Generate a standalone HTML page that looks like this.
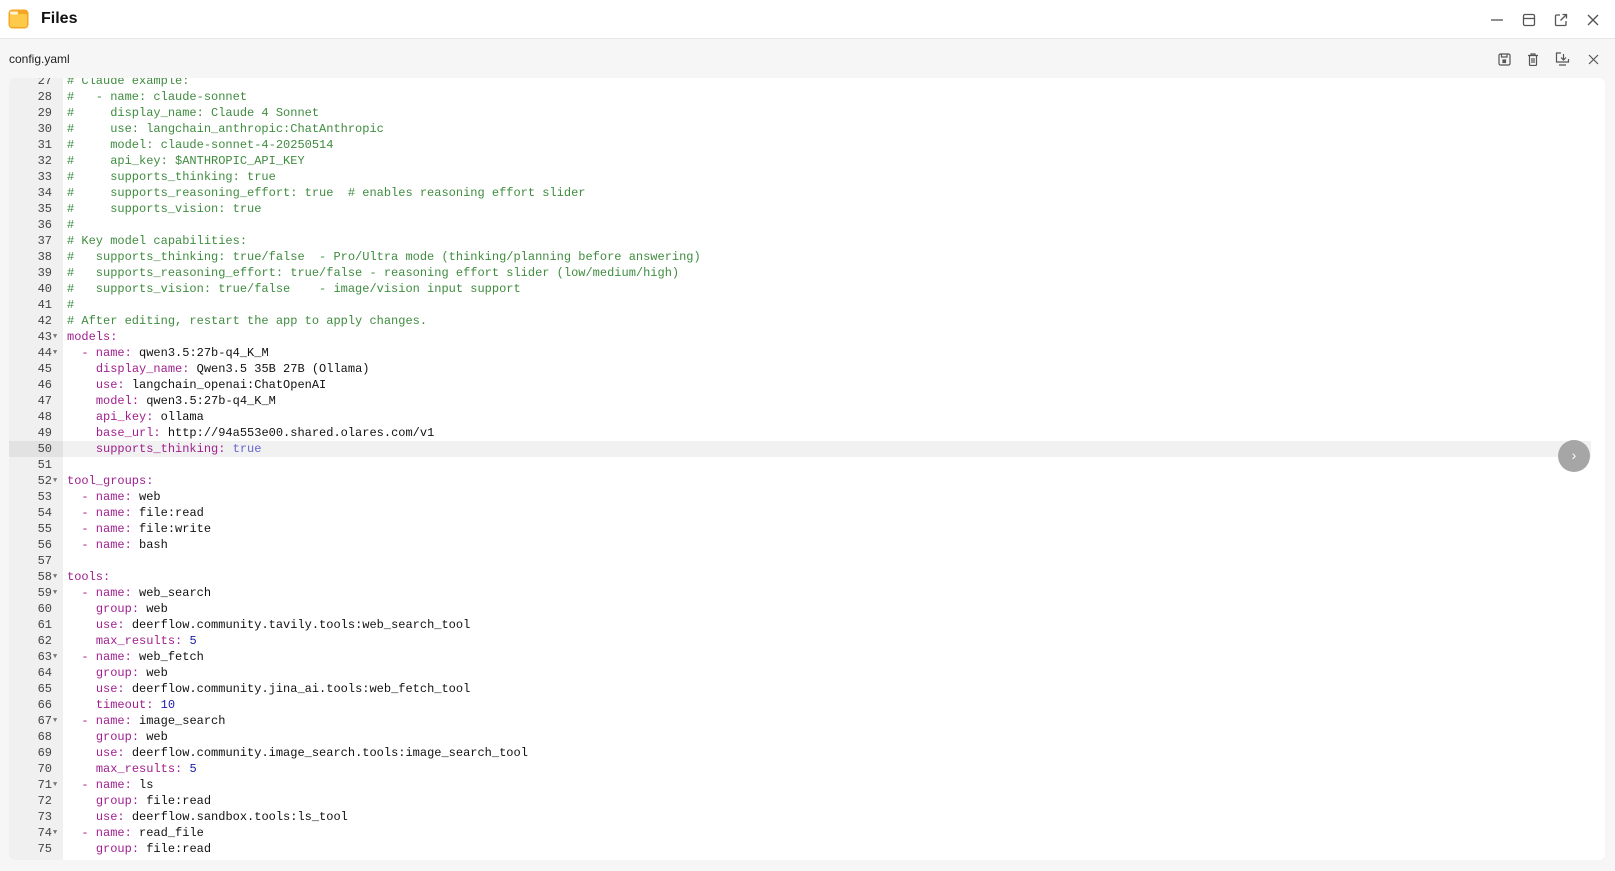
<!DOCTYPE html>
<html><head><meta charset="utf-8"><style>
*{margin:0;padding:0;box-sizing:border-box}
body{width:1615px;height:871px;background:#f6f6f6;font-family:"Liberation Sans",sans-serif;overflow:hidden;position:relative}
.title{position:absolute;left:0;top:0;width:1615px;height:39px;background:#fff;border-bottom:1px solid #e6e6e6}
.title .t{position:absolute;left:41px;top:10px;font-size:16px;font-weight:bold;color:#111}
.fname{position:absolute;left:9px;top:52px;font-size:12px;color:#222}
.panel{position:absolute;left:9px;top:78px;width:1596px;height:782px;background:#fff;border-radius:6px;overflow:hidden}
.gut{position:absolute;left:0;top:0;width:54px;height:100%;background:#f0f0f0}
.code{position:absolute;left:0;top:-5px;width:100%;font-family:"Liberation Mono",monospace;font-size:12px}
.l{height:16px;line-height:16px;white-space:pre;position:relative}
.n{position:absolute;left:0;width:43px;text-align:right;color:#444}
.f{position:absolute;left:44px;top:0;font-size:7px;color:#777}
.c{position:absolute;left:58px;color:#111}
.hl{background:#f1f1f1;width:1582px}
.hl .n{background:#e2e2e2;width:54px;padding-right:11px}
.g{color:#3f8c3f}.k{color:#a0208f}.v{color:#1c1ca8}.b{color:#6666cc}
svg{position:absolute}
</style></head><body>
<div class="title">
<svg style="left:8px;top:9px" width="21" height="20" viewBox="0 0 21 20"><rect x="0.5" y="0.5" width="20" height="19" rx="4" fill="#f5a623"/><rect x="2" y="5" width="17" height="13" rx="2" fill="#ffc94a"/><rect x="2" y="2.5" width="8" height="3" rx="1" fill="#fff3d0"/></svg>
<div class="t">Files</div>
<svg style="left:1490px;top:13px" width="14" height="14" viewBox="0 0 14 14" fill="none" stroke="#555" stroke-width="1.3"><path d="M1 7H13"/></svg>
<svg style="left:1522px;top:13px" width="14" height="14" viewBox="0 0 14 14" fill="none" stroke="#555" stroke-width="1.3"><rect x="1.5" y="1.5" width="11" height="11" rx="1.5"/><path d="M1.5 5.5H12.5"/></svg>
<svg style="left:1554px;top:13px" width="14" height="14" viewBox="0 0 14 14" fill="none" stroke="#555" stroke-width="1.3"><path d="M6 2H2.5A1 1 0 0 0 1.5 3V11.5A1 1 0 0 0 2.5 12.5H11A1 1 0 0 0 12 11.5V8M8.5 1.5H12.5V5.5M12.5 1.5L6.5 7.5"/></svg>
<svg style="left:1586px;top:13px" width="14" height="14" viewBox="0 0 14 14" fill="none" stroke="#555" stroke-width="1.4"><path d="M2 2L12 12M12 2L2 12"/></svg>
</div>
<div class="fname">config.yaml</div>
<svg style="left:1498px;top:53px" width="13" height="13" viewBox="0 0 13 13" fill="none" stroke="#555" stroke-width="1.2"><rect x="1" y="1" width="11" height="11" rx="1.5"/><path d="M3.5 1V4H9V1"/><rect x="5" y="7" width="2.5" height="2.5" fill="#555"/></svg>
<svg style="left:1527px;top:53px" width="12" height="13" viewBox="0 0 12 13" fill="none" stroke="#555" stroke-width="1.2"><path d="M1 2.5H11M4 2.5V1H8V2.5M2.5 2.5V11.5A1 1 0 0 0 3.5 12.5H8.5A1 1 0 0 0 9.5 11.5V2.5M5 5V10M7 5V10"/></svg>
<svg style="left:1555px;top:52px" width="15" height="14" viewBox="0 0 15 14" fill="none" stroke="#555" stroke-width="1.2"><path d="M6 1H1.5V10H13.5V7M4 13H11M8.5 2V8M6 5.5L8.5 8L11 5.5"/></svg>
<svg style="left:1588px;top:54px" width="11" height="11" viewBox="0 0 11 11" fill="none" stroke="#555" stroke-width="1.2"><path d="M1 1L10 10M10 1L1 10"/></svg>
<div class="panel"><div class="gut"></div><div class="code">
<div class="l"><span class="n">27</span><span class="c g"># Claude example:</span></div>
<div class="l"><span class="n">28</span><span class="c g">#   - name: claude-sonnet</span></div>
<div class="l"><span class="n">29</span><span class="c g">#     display_name: Claude 4 Sonnet</span></div>
<div class="l"><span class="n">30</span><span class="c g">#     use: langchain_anthropic:ChatAnthropic</span></div>
<div class="l"><span class="n">31</span><span class="c g">#     model: claude-sonnet-4-20250514</span></div>
<div class="l"><span class="n">32</span><span class="c g">#     api_key: $ANTHROPIC_API_KEY</span></div>
<div class="l"><span class="n">33</span><span class="c g">#     supports_thinking: true</span></div>
<div class="l"><span class="n">34</span><span class="c g">#     supports_reasoning_effort: true  # enables reasoning effort slider</span></div>
<div class="l"><span class="n">35</span><span class="c g">#     supports_vision: true</span></div>
<div class="l"><span class="n">36</span><span class="c g">#</span></div>
<div class="l"><span class="n">37</span><span class="c g"># Key model capabilities:</span></div>
<div class="l"><span class="n">38</span><span class="c g">#   supports_thinking: true/false  - Pro/Ultra mode (thinking/planning before answering)</span></div>
<div class="l"><span class="n">39</span><span class="c g">#   supports_reasoning_effort: true/false - reasoning effort slider (low/medium/high)</span></div>
<div class="l"><span class="n">40</span><span class="c g">#   supports_vision: true/false    - image/vision input support</span></div>
<div class="l"><span class="n">41</span><span class="c g">#</span></div>
<div class="l"><span class="n">42</span><span class="c g"># After editing, restart the app to apply changes.</span></div>
<div class="l"><span class="n">43</span><span class="f">▼</span><span class="c"><span class="k">models:</span></span></div>
<div class="l"><span class="n">44</span><span class="f">▼</span><span class="c">  <span class="k">- name:</span> qwen3.5:27b-q4_K_M</span></div>
<div class="l"><span class="n">45</span><span class="c">    <span class="k">display_name:</span> Qwen3.5 35B 27B (Ollama)</span></div>
<div class="l"><span class="n">46</span><span class="c">    <span class="k">use:</span> langchain_openai:ChatOpenAI</span></div>
<div class="l"><span class="n">47</span><span class="c">    <span class="k">model:</span> qwen3.5:27b-q4_K_M</span></div>
<div class="l"><span class="n">48</span><span class="c">    <span class="k">api_key:</span> ollama</span></div>
<div class="l"><span class="n">49</span><span class="c">    <span class="k">base_url:</span> http://94a553e00.shared.olares.com/v1</span></div>
<div class="l hl"><span class="n">50</span><span class="c">    <span class="k">supports_thinking:</span> <span class="b">true</span></span></div>
<div class="l"><span class="n">51</span></div>
<div class="l"><span class="n">52</span><span class="f">▼</span><span class="c"><span class="k">tool_groups:</span></span></div>
<div class="l"><span class="n">53</span><span class="c">  <span class="k">- name:</span> web</span></div>
<div class="l"><span class="n">54</span><span class="c">  <span class="k">- name:</span> file:read</span></div>
<div class="l"><span class="n">55</span><span class="c">  <span class="k">- name:</span> file:write</span></div>
<div class="l"><span class="n">56</span><span class="c">  <span class="k">- name:</span> bash</span></div>
<div class="l"><span class="n">57</span></div>
<div class="l"><span class="n">58</span><span class="f">▼</span><span class="c"><span class="k">tools:</span></span></div>
<div class="l"><span class="n">59</span><span class="f">▼</span><span class="c">  <span class="k">- name:</span> web_search</span></div>
<div class="l"><span class="n">60</span><span class="c">    <span class="k">group:</span> web</span></div>
<div class="l"><span class="n">61</span><span class="c">    <span class="k">use:</span> deerflow.community.tavily.tools:web_search_tool</span></div>
<div class="l"><span class="n">62</span><span class="c">    <span class="k">max_results:</span> <span class="v">5</span></span></div>
<div class="l"><span class="n">63</span><span class="f">▼</span><span class="c">  <span class="k">- name:</span> web_fetch</span></div>
<div class="l"><span class="n">64</span><span class="c">    <span class="k">group:</span> web</span></div>
<div class="l"><span class="n">65</span><span class="c">    <span class="k">use:</span> deerflow.community.jina_ai.tools:web_fetch_tool</span></div>
<div class="l"><span class="n">66</span><span class="c">    <span class="k">timeout:</span> <span class="v">10</span></span></div>
<div class="l"><span class="n">67</span><span class="f">▼</span><span class="c">  <span class="k">- name:</span> image_search</span></div>
<div class="l"><span class="n">68</span><span class="c">    <span class="k">group:</span> web</span></div>
<div class="l"><span class="n">69</span><span class="c">    <span class="k">use:</span> deerflow.community.image_search.tools:image_search_tool</span></div>
<div class="l"><span class="n">70</span><span class="c">    <span class="k">max_results:</span> <span class="v">5</span></span></div>
<div class="l"><span class="n">71</span><span class="f">▼</span><span class="c">  <span class="k">- name:</span> ls</span></div>
<div class="l"><span class="n">72</span><span class="c">    <span class="k">group:</span> file:read</span></div>
<div class="l"><span class="n">73</span><span class="c">    <span class="k">use:</span> deerflow.sandbox.tools:ls_tool</span></div>
<div class="l"><span class="n">74</span><span class="f">▼</span><span class="c">  <span class="k">- name:</span> read_file</span></div>
<div class="l"><span class="n">75</span><span class="c">    <span class="k">group:</span> file:read</span></div>
</div></div>
<div style="position:absolute;left:1558px;top:440px;width:32px;height:32px;border-radius:50%;background:#a6a6a6;color:#fff;font-size:14px;text-align:center;line-height:31px">›</div>
</body></html>
